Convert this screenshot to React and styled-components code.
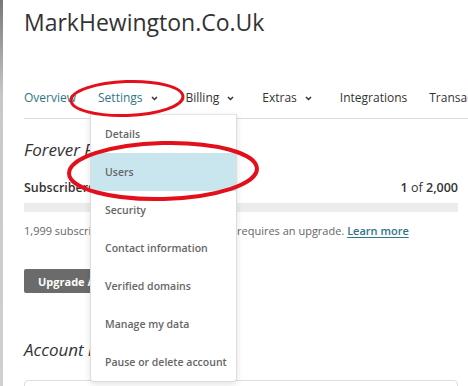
import React from 'react';
import styled, { createGlobalStyle } from 'styled-components';

const GlobalStyle = createGlobalStyle`
  html, body {
    margin: 0;
    padding: 0;
    background: #fff;
  }
  body {
    font-family: 'Open Sans', 'Noto Sans', sans-serif;
    color: #333;
  }
`;

const Page = styled.div`
  position: relative;
  width: 468px;
  height: 386px;
  box-sizing: border-box;
  padding: 7px 10px 0 21px;
  border-left: 3px solid;
  border-image: linear-gradient(#777, #c8c8c8 25%, #d0d0d0) 1;
  overflow: hidden;
`;

const Title = styled.h1`
  margin: 0;
  font-size: 23px;
  line-height: 30px;
  font-weight: 400;
  color: #333;
`;

const NavBar = styled.nav`
  margin: 53px -10px 0 0;
  padding-bottom: 12px;
  border-bottom: 1px solid #ddd;
  display: flex;
  gap: 22px;
  white-space: nowrap;
`;

const NavItem = styled.div`
  position: relative;
  display: flex;
  align-items: center;
  font-size: 12px;
  line-height: 16px;
  color: ${p => (p.$active ? '#2f7585' : '#333')};
`;

const Chevron = styled.svg`
  width: 7px;
  height: 5px;
  margin: 1px 6px 0 8px;
`;

const Dropdown = styled.ul`
  position: absolute;
  top: calc(100% + 8px);
  left: -8px;
  width: 145px;
  margin: 0;
  padding: 0;
  list-style: none;
  background: #fff;
  border: 1px solid #ddd;
  border-top-color: #e6e6e6;
  border-radius: 0 0 4px 4px;
  box-shadow: 0 2px 6px rgba(0, 0, 0, 0.12);
  z-index: 2;
`;

const DropItem = styled.li`
  height: 38px;
  display: flex;
  align-items: center;
  padding-left: 14px;
  font-size: 10.5px;
  font-weight: 600;
  color: #666;
  background: ${p => (p.$selected ? '#c9e6ef' : 'transparent')};
`;

const SectionHeading = styled.h2`
  margin: ${p => p.$top}px 0 0;
  font-size: 17px;
  line-height: 22px;
  font-weight: 400;
  font-style: italic;
  color: #333;
`;

const StatRow = styled.div`
  margin-top: 19px;
  display: flex;
  justify-content: space-between;
  font-size: 12.5px;
  line-height: 16px;
  font-weight: 600;
  color: #333;
`;

const Light = styled.span`
  font-weight: 400;
`;

const Progress = styled.div`
  margin-top: 7px;
  height: 9px;
  background: #ececec;
`;

const Note = styled.p`
  margin: 12px 0 0;
  font-size: 11px;
  line-height: 14px;
  color: #666;
`;

const Link = styled.a`
  color: #2f7585;
  font-weight: 600;
  text-decoration: underline;
  text-underline-offset: 2px;
`;

const Button = styled.button`
  display: block;
  margin-top: 31px;
  height: 24px;
  padding: 0 14px;
  border: none;
  border-radius: 2px;
  background: #6b6b6b;
  color: #fff;
  font-family: inherit;
  font-size: 11px;
  font-weight: 700;
`;

const Card = styled.div`
  margin-top: 19px;
  height: 100px;
  border: 1px solid #ddd;
  border-radius: 4px;
`;

const Annotations = styled.svg`
  position: absolute;
  left: -3px;
  top: 0;
  width: 468px;
  height: 386px;
  pointer-events: none;
  z-index: 5;
`;

const menu = [
  'Details',
  'Users',
  'Security',
  'Contact information',
  'Verified domains',
  'Manage my data',
  'Pause or delete account',
];

const ChevronDown = () => (
  <Chevron viewBox="0 0 7 5">
    <path d="M1 1l2.5 2.5L6 1" fill="none" stroke="#333" strokeWidth="1.5" />
  </Chevron>
);

export default function App() {
  return (
    <>
      <GlobalStyle />
      <Page>
        <Title>MarkHewington.Co.Uk</Title>
        <NavBar>
          <NavItem $active>Overview</NavItem>
          <NavItem $active>
            Settings
            <ChevronDown />
            <Dropdown>
              {menu.map(m => (
                <DropItem key={m} $selected={m === 'Users'}>
                  {m}
                </DropItem>
              ))}
            </Dropdown>
          </NavItem>
          <NavItem>
            Billing
            <ChevronDown />
          </NavItem>
          <NavItem>
            Extras
            <ChevronDown />
          </NavItem>
          <NavItem>Integrations</NavItem>
          <NavItem>Transactional</NavItem>
        </NavBar>

        <SectionHeading $top={20}>Forever Free</SectionHeading>
        <StatRow>
          <span>Subscribers</span>
          <span>
            1 <Light>of</Light> 2,000
          </span>
        </StatRow>
        <Progress />
        <Note>
          1,999 subscribers left. Going above 2,000 requires an upgrade.{' '}
          <Link>Learn more</Link>
        </Note>
        <Button>Upgrade Account</Button>

        <SectionHeading $top={46}>Account info</SectionHeading>
        <Card />

        <Annotations viewBox="0 0 468 386">
          <ellipse cx="127" cy="98.5" rx="56" ry="17" fill="none" stroke="#e3101b" strokeWidth="3" transform="rotate(-2 127 98.5)" />
          <ellipse cx="163" cy="171" rx="94" ry="28" fill="none" stroke="#e3101b" strokeWidth="4" transform="rotate(-1.5 163 171)" />
        </Annotations>
      </Page>
    </>
  );
}
